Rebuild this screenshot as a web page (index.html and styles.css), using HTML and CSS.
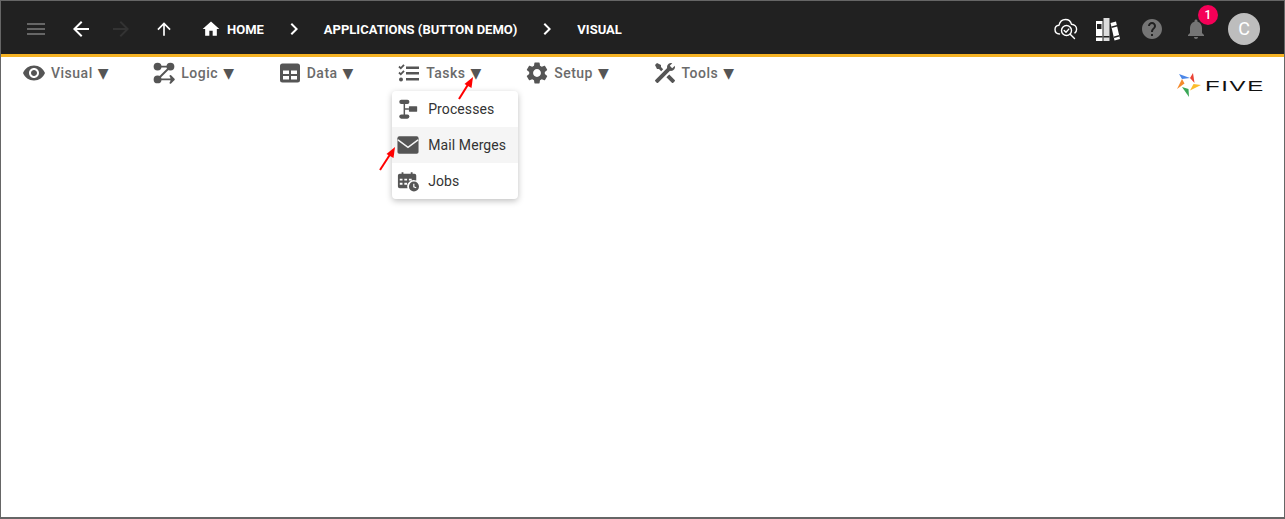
FILE: index.html
```html
<!DOCTYPE html>
<html lang="en">
<head>
    <meta charset="UTF-8">
    <title>Five - Visual</title>
    <link rel="stylesheet" href="styles.css">
</head>
<body>
    <div class="app">
        <header class="topbar">
            <button class="nav-btn hamburger"><svg viewBox="0 0 24 24"><path d="M3 18h18v-2H3v2zm0-5h18v-2H3v2zm0-7v2h18V6H3z"/></svg></button>
            <button class="nav-btn back"><svg viewBox="0 0 24 24"><path d="M20 11H7.83l5.59-5.59L12 4l-8 8 8 8 1.41-1.41L7.83 13H20v-2z"/></svg></button>
            <button class="nav-btn forward"><svg viewBox="0 0 24 24"><path d="M12 4l-1.41 1.41L16.17 11H4v2h12.17l-5.58 5.59L12 20l8-8z"/></svg></button>
            <button class="nav-btn up"><svg viewBox="0 0 24 24"><path d="M4 12l1.41 1.41L11 7.83V20h2V7.83l5.58 5.59L20 12l-8-8-8 8z"/></svg></button>

            <nav class="crumbs">
                <svg class="home-icon" viewBox="0 0 24 24"><path d="M10 20v-6h4v6h5v-8h3L12 3 2 12h3v8z"/></svg>
                <span class="crumb">HOME</span>
                <svg class="crumb-sep" viewBox="0 0 24 24"><path d="M10 6L8.59 7.41 13.17 12l-4.58 4.59L10 18l6-6z"/></svg>
                <span class="crumb">APPLICATIONS (BUTTON DEMO)</span>
                <svg class="crumb-sep" viewBox="0 0 24 24"><path d="M10 6L8.59 7.41 13.17 12l-4.58 4.59L10 18l6-6z"/></svg>
                <span class="crumb">VISUAL</span>
            </nav>

            <div class="top-actions">
                <!-- cloud with magnifier -->
                <svg class="action cloud" viewBox="0 0 24 24" fill="none" stroke="#fff" stroke-width="1.4" stroke-linecap="round" stroke-linejoin="round">
                    <path d="M5.500 17c-2.800-.2-4.500-2.200-4.500-4.600 0-2.400 1.800-4 4-4.200C5.800 4.800 8.500 2.500 11.500 2.500c3 0 5.300 2 6 4.800 2.800.2 5.100 2.200 5.100 4.900 0 1.500-.6 2.800-1.700 3.700"/>
                    <circle cx="12.500" cy="13.500" r="5"/>
                    <path d="M16.200 17.200l4.300 4.300"/>
                    <path d="M10.200 13.500l1.800 1.800 2.800-3.200"/>
                </svg>
                <!-- books -->
                <svg class="action books" viewBox="0 0 24 24">
                    <path fill="#fff" d="M0 4h6.500v20H0z"/>
                    <path fill="#ddd" d="M7.500 1h6v23h-6z"/>
                    <path fill="#fff" d="M14.500 6l5.500-1.500L24 22l-5.500 1.500z"/>
                    <path fill="#212121" d="M1 7h4.500v5H1zM0 19h6.500v1.500H0zM7.500 19h6v1.500h-6zM15.300 9.500l5.600-1.400.3 1.400-5.600 1.400zM17.900 19.500l5.300-1.400.3 1.400-5.300 1.400z"/>
                </svg>
                <svg class="action dim" viewBox="0 0 24 24"><path d="M12 2C6.480 2 2 6.480 2 12s4.480 10 10 10 10-4.480 10-10S17.520 2 12 2zm1 17h-2v-2h2v2zm2.070-7.750l-.9.920C13.450 12.900 13 13.500 13 15h-2v-.5c0-1.100.45-2.100 1.170-2.830l1.240-1.260c.37-.36.59-.86.59-1.410 0-1.100-.9-2-2-2s-2 .9-2 2H8c0-2.210 1.790-4 4-4s4 1.790 4 4c0 .88-.36 1.680-.93 2.250z"/></svg>
                <div class="bell">
                    <svg class="action dim" viewBox="0 0 24 24"><path d="M12 22c1.100 0 2-.9 2-2h-4c0 1.100.89 2 2 2zm6-6v-5c0-3.070-1.640-5.640-4.500-6.320V4c0-.83-.67-1.500-1.500-1.500s-1.500.67-1.500 1.500v.68C7.630 5.360 6 7.920 6 11v5l-2 2v1h16v-1l-2-2z"/></svg>
                    <span class="badge">1</span>
                </div>
                <div class="avatar">C</div>
            </div>
        </header>

        <div class="menubar">
            <div class="menu-item">
                <svg viewBox="0 0 24 24"><path d="M12 4.500C7 4.500 2.730 7.610 1 12c1.730 4.390 6 7.500 11 7.500s9.270-3.110 11-7.500c-1.730-4.390-6-7.500-11-7.500zM12 17c-2.760 0-5-2.240-5-5s2.240-5 5-5 5 2.240 5 5-2.240 5-5 5zm0-8c-1.660 0-3 1.340-3 3s1.340 3 3 3 3-1.340 3-3-1.340-3-3-3z"/></svg>
                <span>Visual</span><i class="caret">▼</i>
            </div>
            <div class="menu-item">
                <svg viewBox="-2 -2 28 28" fill="none" stroke="#555" stroke-width="2.200" stroke-linecap="round" stroke-linejoin="round">
                    <circle cx="4.500" cy="4.500" r="3.500"/><circle cx="19.500" cy="4.500" r="3.500"/><circle cx="4.500" cy="19.500" r="3.500"/>
                    <path d="M8 4.500h8M7 17L17 7M8 19.500h15.500M19.500 15.500l4 4-4 4"/>
                </svg>
                <span>Logic</span><i class="caret">▼</i>
            </div>
            <div class="menu-item">
                <svg viewBox="0 0 24 24"><path fill-rule="evenodd" d="M4.500 2.500h15a2.500 2.500 0 0 1 2.500 2.500v14a2.500 2.500 0 0 1-2.500 2.500h-15A2.500 2.500 0 0 1 2 19V5a2.500 2.500 0 0 1 2.500-2.500zM5 9.500v3.500h6V9.500zm8 0v3.500h6V9.500zM5 15v3.500h6V15zm8 0v3.500h6V15z"/></svg>
                <span>Data</span><i class="caret">▼</i>
            </div>
            <div class="menu-item has-dropdown">
                <svg viewBox="0 0 24 24"><path d="M9 5.500h13v2.500H9zM9 11h13v2.500H9zM9 17h13v2.500H9z"/><path fill="none" stroke="#555" stroke-width="1.800" d="M2 5.500l1.800 1.800L7 3.800M2 11.500l1.800 1.800L7 9.800"/><circle cx="4" cy="18.500" r="2"/></svg>
                <span>Tasks</span><i class="caret">▼</i>

                <div class="dropdown">
                    <div class="dropdown-row">
                        <svg viewBox="0 0 24 24"><rect x="2.500" y="2" width="11" height="4.500" rx="2.200"/><rect x="2.500" y="18" width="11" height="4.500" rx="2.200"/><path d="M7.200 4h1.600v16H7.200zM8 11.200h5v1.600H8z"/><rect x="13" y="9" width="9" height="6" rx=".5"/></svg>
                        <span>Processes</span>
                    </div>
                    <div class="dropdown-row active">
                        <svg viewBox="0 0 24 24"><rect x="0.500" y="2.500" width="23" height="19" rx="2"/><path fill="none" stroke="#f5f5f5" stroke-width="1.600" d="M1 6.500l11 8 11-8"/></svg>
                        <span>Mail Merges</span>
                    </div>
                    <div class="dropdown-row">
                        <svg viewBox="0 0 24 24"><path fill-rule="evenodd" d="M3 4h2V2.500h2V4h8V2.500h2V4h2a2 2 0 0 1 2 2v5.500a7 7 0 0 0-9.500 8.500H3a2 2 0 0 1-2-2V6a2 2 0 0 1 2-2zM3 9.500v2h3v-2zm5 0v2h3v-2zm5 0v2h3v-2zM3 14v2h3v-2zm5 0v2h3v-2z"/><path fill-rule="evenodd" d="M18.500 12.500a5.500 5.500 0 1 1 0 11 5.500 5.500 0 0 1 0-11zm-.8 2.500v3.800l3 1.200.5-1.200-2.200-.9V15z"/></svg>
                        <span>Jobs</span>
                    </div>
                </div>
            </div>
            <div class="menu-item">
                <svg viewBox="1 1 22 22"><path d="M19.140 12.940c.04-.3.06-.61.06-.94 0-.32-.02-.64-.07-.94l2.030-1.580c.18-.14.23-.41.12-.61l-1.920-3.320c-.12-.22-.37-.29-.59-.22l-2.390.96c-.5-.38-1.030-.7-1.620-.94l-.36-2.540c-.04-.24-.24-.41-.48-.41h-3.840c-.24 0-.43.17-.47.41l-.36 2.540c-.59.24-1.130.57-1.620.94l-2.390-.96c-.22-.08-.47 0-.59.22L2.740 8.870c-.12.21-.08.47.12.61l2.030 1.580c-.05.3-.09.63-.09.94s.02.64.07.94l-2.030 1.580c-.18.14-.23.41-.12.61l1.920 3.320c.12.22.37.29.59.22l2.390-.96c.5.38 1.030.7 1.620.94l.36 2.540c.05.24.24.41.48.41h3.840c.24 0 .44-.17.47-.41l.36-2.540c.59-.24 1.130-.56 1.620-.94l2.390.96c.22.08.47 0 .59-.22l1.920-3.320c.12-.22.07-.47-.12-.61l-2.010-1.580zM12 15.600c-1.980 0-3.600-1.620-3.600-3.600s1.620-3.600 3.600-3.600 3.600 1.620 3.600 3.600-1.620 3.600-3.600 3.600z"/></svg>
                <span>Setup</span><i class="caret">▼</i>
            </div>
            <div class="menu-item">
                <svg viewBox="0 0 24 24"><path transform="translate(24,0) scale(-1,1)" d="M21.710 20.290L20.290 21.710A1 1 0 0 1 18.880 21.710L7 9.850A3.810 3.810 0 0 1 6 10A4 4 0 0 1 2.220 4.700L4.760 7.240L5.290 6.710L6.710 5.290L7.240 4.760L4.700 2.220A4 4 0 0 1 10 6A3.810 3.810 0 0 1 9.850 7L21.710 18.880A1 1 0 0 1 21.710 20.290M2.290 18.880A1 1 0 0 0 2.290 20.290L3.710 21.710A1 1 0 0 0 5.120 21.710L10.590 16.250L7.760 13.420M20 2L16 4V6L13.830 8.170L15.830 10.170L18 8H20L22 4Z"/></svg>
                <span>Tools</span><i class="caret">▼</i>
            </div>

            <div class="logo">
                <svg viewBox="0 0 24 24">
                    <polygon fill="#4a86e8" points="2,1 13,5 5,6"/>
                    <polygon fill="#ea4335" points="16,0 17.500,10 13,5"/>
                    <polygon fill="#fbbc2c" points="24,12 13,17.500 16.500,11"/>
                    <polygon fill="#3aa757" points="12,24 5,14 11.500,16"/>
                    <polygon fill="#f58a2c" points="0,16 5,6 7.500,10.500"/>
                </svg>
                <span class="logo-text">FIVE</span>
            </div>
        </div>

        <!-- annotation arrows -->
        <svg class="annotations" viewBox="0 0 1285 519">
            <path d="M459 99L469 83" stroke="#f00" stroke-width="2"/>
            <polygon fill="#f00" points="473,77 471.500,88 464.500,84"/>
            <path d="M380 170L391 153" stroke="#f00" stroke-width="2"/>
            <polygon fill="#f00" points="395,147 393.500,158 386.500,154"/>
        </svg>
    </div>
</body>
</html>
```

FILE: styles.css
```css
html, body {
    margin: 0;
    height: 100%;
}
body {
    font-family: Roboto, "Liberation Sans", sans-serif;
    background-color: white;
    overflow: hidden;
}
.app {
    position: relative;
    box-sizing: border-box;
    height: 519px;
    border: 1px solid #666;
    border-bottom-width: 2px;
    background-color: white;
}

/* top bar */
.topbar {
    display: flex;
    align-items: center;
    box-sizing: border-box;
    height: 56px;
    padding-left: 15px;
    padding-top: 3px;
    background-color: #212121;
    border-bottom: 3px solid #f6b324;
}
.nav-btn {
    display: flex;
    justify-content: center;
    align-items: center;
    width: 40px;
    height: 24px;
    padding: 0;
    border: none;
    background: none;
}
.nav-btn svg {
    width: 24px;
    height: 24px;
    fill: white;
}
.hamburger svg {
    fill: #666;
}
.back {
    margin-left: 5px;
}
.forward svg {
    fill: #333;
}
.up {
    margin-left: 3px;
}
.nav-btn.up svg {
    width: 20px;
    height: 20px;
}
.crumbs {
    display: flex;
    align-items: center;
    margin-left: 17px;
}
.home-icon {
    width: 20px;
    height: 20px;
    margin-right: 6px;
    fill: white;
}
.crumb {
    font-size: 13px;
    font-weight: 700;
    color: white;
}
.crumb-sep {
    width: 24px;
    height: 24px;
    margin: 0 18px;
    fill: white;
}
.top-actions {
    display: flex;
    align-items: center;
    gap: 20px;
    margin-left: auto;
    padding-right: 24px;
}
.action {
    display: block;
    width: 24px;
    height: 24px;
}
.cloud {
    margin-right: -2px;
}
.dim {
    fill: #757575;
}
.bell {
    position: relative;
}
.badge {
    position: absolute;
    top: -12px;
    left: 14px;
    width: 20px;
    height: 20px;
    border-radius: 50%;
    background-color: #f50057;
    color: white;
    font-size: 12px;
    font-weight: 500;
    line-height: 20px;
    text-align: center;
}
.avatar {
    width: 32px;
    height: 32px;
    border-radius: 50%;
    background-color: #bdbdbd;
    color: white;
    font-size: 18px;
    line-height: 32px;
    text-align: center;
}

/* menu bar */
.menubar {
    display: flex;
    align-items: flex-start;
    gap: 43.8px;
    padding-left: 21px;
    padding-right: 21px;
}
.menu-item {
    position: relative;
    display: flex;
    align-items: center;
    height: 32px;
    font-size: 14px;
    font-weight: 500;
    letter-spacing: 0.5px;
    color: #6b6b6b;
}
.menu-item > svg {
    width: 24px;
    height: 24px;
    margin-right: 5px;
    fill: #555;
}
.caret {
    margin-left: 5px;
    font-style: normal;
    font-family: "DejaVu Sans", sans-serif;
    font-size: 14px;
    letter-spacing: 0;
    color: #555;
}
.dropdown {
    position: absolute;
    top: 34px;
    left: -5px;
    z-index: 2;
    width: 126px;
    padding: 0;
    border-radius: 4px;
    background-color: white;
    box-shadow: 0 2px 6px rgba(0,0,0,0.25);
}
.dropdown-row {
    display: flex;
    align-items: center;
    height: 36px;
    padding-left: 5px;
    font-size: 14px;
    font-weight: 400;
    letter-spacing: 0.1px;
    color: #333;
}
.dropdown-row svg {
    width: 22px;
    height: 22px;
    margin-right: 9px;
    fill: #555;
}
.dropdown-row.active {
    background-color: #f5f5f5;
}
.logo {
    display: flex;
    align-items: center;
    margin-left: auto;
    margin-top: 16px;
}
.logo svg {
    width: 24px;
    height: 24px;
}
.logo-text {
    display: block;
    width: 58px;
    margin-left: 4px;
    font-family: "Liberation Sans", sans-serif;
    font-size: 15px;
    letter-spacing: 1px;
    color: #111;
    transform: scaleX(1.6);
    transform-origin: left center;
}
.annotations {
    position: absolute;
    top: -1px;
    left: -1px;
    z-index: 3;
    width: 1285px;
    height: 519px;
    pointer-events: none;
}
```
